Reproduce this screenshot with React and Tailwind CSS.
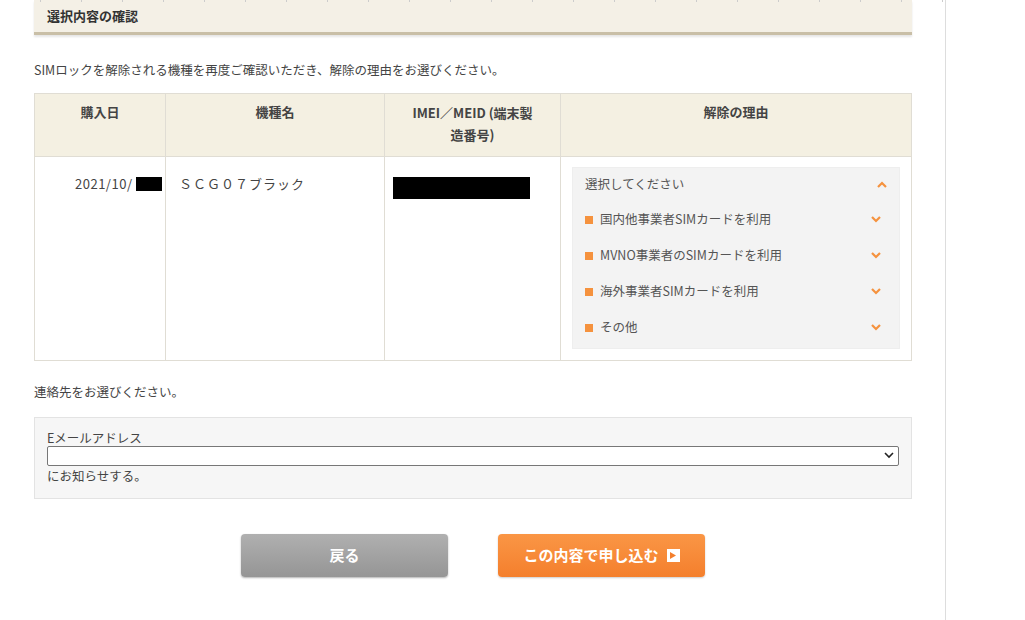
const F = { fontFamily: '"Noto Sans CJK JP","Noto Sans",sans-serif' };
const Chev = ({ up }) => (
  <svg width="10" height="7" viewBox="0 0 10 7"><path d={up ? "M1 6 L5 2 L9 6" : "M1 1 L5 5 L9 1"} stroke="#f5923e" strokeWidth="2.2" fill="none" /></svg>
);
export default function App() {
  const reasons = ["国内他事業者SIMカードを利用", "MVNO事業者のSIMカードを利用", "海外事業者SIMカードを利用", "その他"];
  return (
    <div style={F} className="w-[1025px] h-[620px] bg-white overflow-hidden relative text-[#444]">
      <div className="w-[946px] h-[620px] border-r border-[#ddd] relative">
        <div className="absolute top-0 left-0 right-0 h-[2px] flex">
          {Array.from({ length: 23 }).map((_, i) => <div key={i} className="w-[41px] h-[2px] border-r border-[#ccc]" />)}
        </div>
        <div className="pl-[34px] w-[912px]">
          <div className="h-[35px] bg-[#f4f0e6] border-b-[3px] border-[#c9bfa7] flex items-center px-[13px] text-[13px] font-bold text-[#333] shadow-[0_2px_2px_rgba(0,0,0,0.1)]">選択内容の確認</div>
          <div className="mt-[26px] text-[12.5px]">SIMロックを解除される機種を再度ご確認いただき、解除の理由をお選びください。</div>
          <div className="mt-[13px] border border-[#e0ddd4] text-[13px]">
            <div className="flex h-[62px] bg-[#f4f0e2] font-bold text-[#444]">
              <div className="w-[131px] border-r border-[#e0ddd4] text-center pt-[8px]">購入日</div>
              <div className="w-[219px] border-r border-[#e0ddd4] text-center pt-[8px]">機種名</div>
              <div className="w-[176px] border-r border-[#e0ddd4] text-center pt-[8px] leading-[22px]">IMEI／MEID (端末製<br />造番号)</div>
              <div className="flex-1 text-center pt-[8px]">解除の理由</div>
            </div>
            <div className="flex h-[204px] border-t border-[#e0ddd4]">
              <div className="w-[131px] border-r border-[#e0ddd4] pt-[17px] pl-[40px] flex items-start"><span className="tracking-[0.5px]">2021/10/</span><span className="inline-block w-[26px] h-[14px] bg-black mt-[3px] ml-[4px]" /></div>
              <div className="w-[219px] border-r border-[#e0ddd4] pt-[17px] pl-[13px] tracking-[1px]">ＳＣＧ０７ブラック</div>
              <div className="w-[176px] border-r border-[#e0ddd4] pt-[20px] pl-[8px]"><div className="w-[137px] h-[22px] bg-black" /></div>
              <div className="flex-1 pt-[10px] px-[11px]">
                <div className="bg-[#f3f3f3] border border-[#eee] h-[182px] text-[12.5px] text-[#555]">
                  <div className="flex justify-between items-center h-[34px] px-[12px]"><span>選択してください</span><Chev up /></div>
                  {reasons.map(r => (
                    <div key={r} className="flex justify-between items-center h-[36px] pl-[12px] pr-[18px]">
                      <span className="flex items-center gap-[7px]"><span className="w-[8px] h-[8px] bg-[#f5923e]" />{r}</span><Chev />
                    </div>
                  ))}
                </div>
              </div>
            </div>
          </div>
          <div className="mt-[22px] text-[12.5px]">連絡先をお選びください。</div>
          <div className="mt-[15px] bg-[#f6f6f6] border border-[#e3e3e3] h-[82px] px-[12px] pt-[11px] text-[12.5px] text-[#444] leading-[17px]">
            <div>Eメールアドレス</div>
            <div className="h-[20px] bg-white border border-[#777] rounded-[2px] flex justify-end items-center pr-[4px]">
              <svg width="10" height="7" viewBox="0 0 10 7"><path d="M1 1 L5 5 L9 1" stroke="#222" strokeWidth="1.6" fill="none" /></svg>
            </div>
            <div className="mt-[1px]">にお知らせする。</div>
          </div>
          <div className="mt-[35px] flex justify-center gap-[50px]">
            <div className="w-[207px] h-[43px] rounded-[4px] bg-gradient-to-b from-[#b0b0b0] to-[#959595] shadow-[0_1px_2px_rgba(0,0,0,0.3)] flex items-center justify-center text-white font-bold text-[15px]">戻る</div>
            <div className="w-[207px] h-[43px] rounded-[4px] bg-gradient-to-b from-[#fa9645] to-[#f47f2c] shadow-[0_1px_2px_rgba(0,0,0,0.2)] flex items-center justify-center gap-[8px] text-white font-bold text-[15px]">この内容で申し込む
              <span className="w-[13px] h-[13px] bg-white flex items-center justify-center"><svg width="6" height="7" viewBox="0 0 6 7"><path d="M0 0 L6 3.5 L0 7Z" fill="#f47f2c" /></svg></span>
            </div>
          </div>
        </div>
      </div>
    </div>
  );
}
